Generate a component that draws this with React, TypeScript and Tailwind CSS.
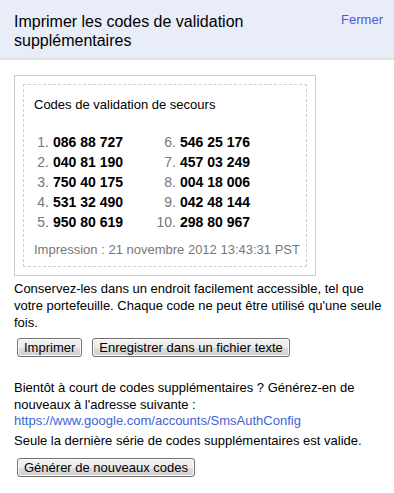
const codes = [
  ['086 88 727', '546 25 176'],
  ['040 81 190', '457 03 249'],
  ['750 40 175', '004 18 006'],
  ['531 32 490', '042 48 144'],
  ['950 80 619', '298 80 967'],
];

function OldButton({ label }: { label: string }) {
  return (
    <button
      type="button"
      className="h-[19px] px-[6px] text-[13px] leading-[17px] text-black border border-[#707070] rounded-[3px] bg-[linear-gradient(#f2f2f2_0%,#ebebeb_50%,#dddddd_51%,#cfcfcf_100%)] shadow-[inset_0_0_0_1px_#fcfcfc]"
    >
      {label}
    </button>
  );
}

export default function App() {
  return (
    <div className="w-[394px] h-[493px] bg-white font-['Liberation_Sans',Arial,sans-serif] text-[#222]">
      {/* header */}
      <div className="h-[60px] bg-[#e8edf8] border-b-2 border-[#e1e1e1] flex justify-between pl-[14px] pr-[11px] pt-[12px]">
        <h1 className="text-[16px] leading-[19px] text-black font-normal w-[260px]">
          Imprimer les codes de validation supplémentaires
        </h1>
        <a href="#" className="text-[13px] leading-[15px] text-[#4a5ad8]">
          Fermer
        </a>
      </div>

      <div className="pl-[14px] pr-[4px] pt-[15px]">
        {/* codes card */}
        <div className="w-[302px] border border-[#cccccc] p-[8px]">
          <div className="border border-dashed border-[#cfcfcf] pl-[10px] pt-[12px] pb-[9px]">
            <p className="text-[13px] leading-[15px] text-black">Codes de validation de secours</p>
            <div className="mt-[20px]">
              {codes.map((row, i) => (
                <div key={i} className="flex h-[20px] items-center text-[14px] leading-[20px]">
                  <span className="w-[15px] text-right text-[#777]">{i + 1}.</span>
                  <span className="ml-[4px] w-[101px] font-bold text-black">{row[0]}</span>
                  <span className="w-[22px] text-right text-[#777]">{i + 6}.</span>
                  <span className="ml-[4px] font-bold text-black">{row[1]}</span>
                </div>
              ))}
            </div>
            <p className="mt-[10px] text-[13px] leading-[15px] text-[#777]">
              Impression : 21 novembre 2012 13:43:31 PST
            </p>
          </div>
        </div>

        <p className="mt-[4px] w-[372px] text-[13px] leading-[17px] text-black">
          Conservez-les dans un endroit facilement accessible, tel que votre portefeuille. Chaque code ne peut être utilisé qu'une seule fois.
        </p>
        <div className="mt-[7px] ml-[3px] flex gap-[10px]">
          <OldButton label="Imprimer" />
          <OldButton label="Enregistrer dans un fichier texte" />
        </div>

        <p className="mt-[23px] w-[366px] text-[13px] leading-[16.5px] text-black">
          Bientôt à court de codes supplémentaires ? Générez-en de nouveaux à l'adresse suivante :{' '}
          <a href="#" className="text-[#4163d6]">https://www.google.com/accounts/SmsAuthConfig</a>
        </p>
        <p className="mt-[2px] text-[13px] leading-[17px] text-black">
          Seule la dernière série de codes supplémentaires est valide.
        </p>
        <div className="mt-[9px] ml-[3px] flex">
          <OldButton label="Générer de nouveaux codes" />
        </div>
      </div>
    </div>
  );
}
